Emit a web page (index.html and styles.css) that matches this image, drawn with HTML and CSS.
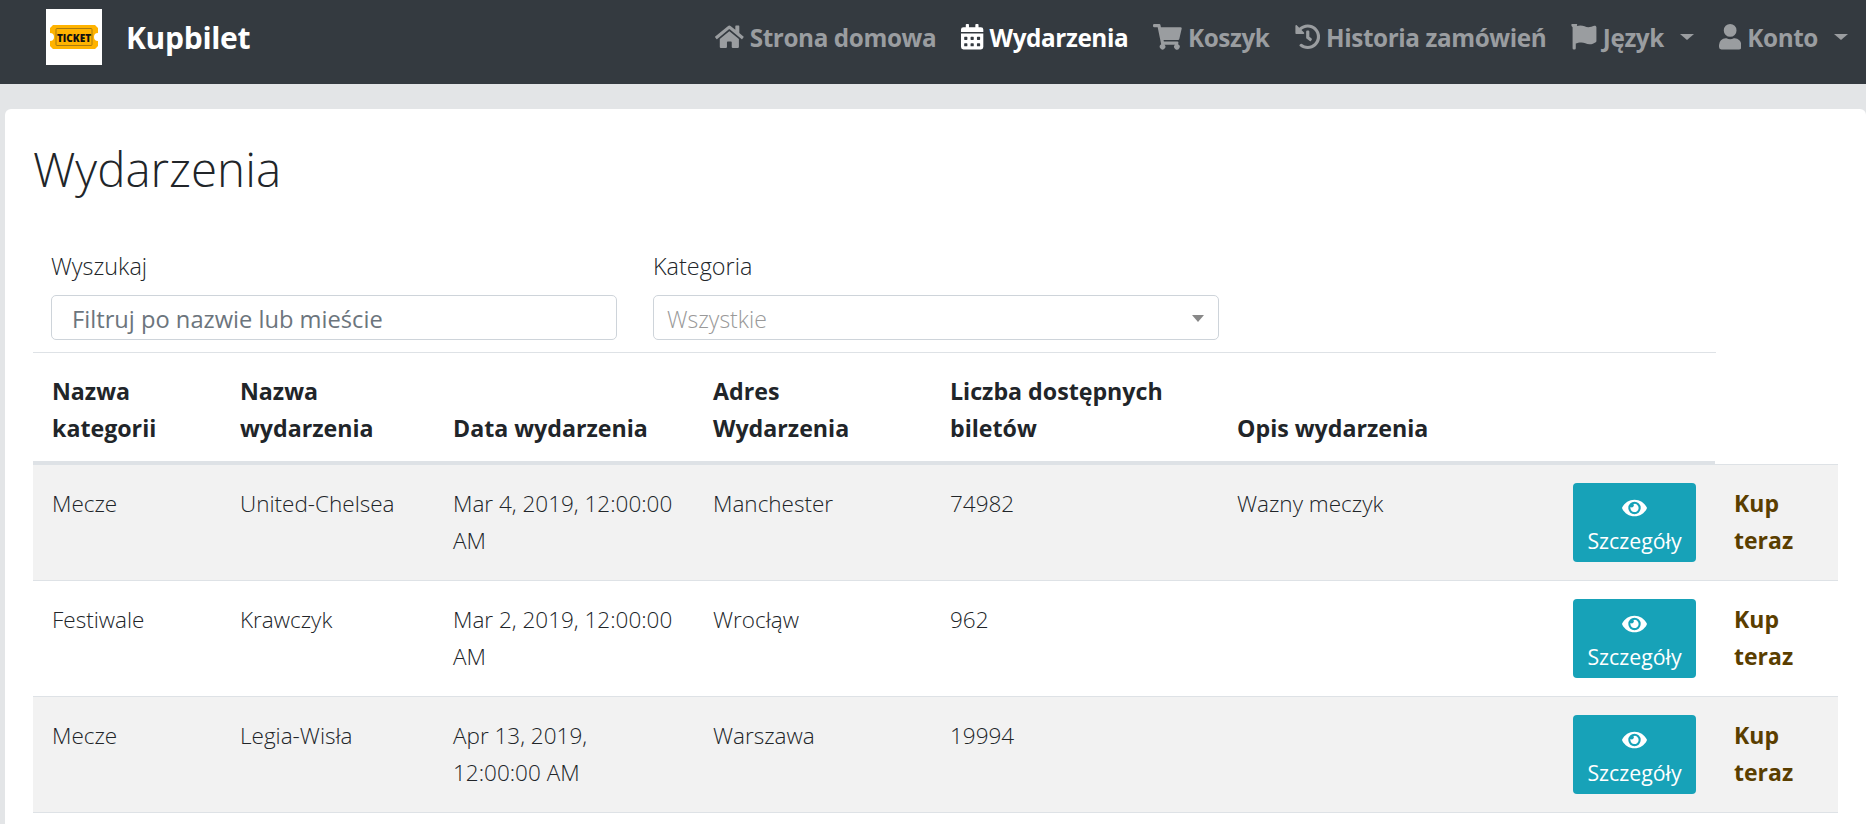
FILE: index.html
```html
<!DOCTYPE html>
<html lang="pl">

<head>
    <meta charset="UTF-8">
    <meta name="viewport" content="width=device-width, initial-scale=1.0">
    <title>Kupbilet</title>
    <link rel="stylesheet" href="styles.css">
</head>

<body>

    <!-- Navbar -->
    <nav class="navbar">
        <div class="brand">
            <div class="brand-logo">
                <svg viewBox="0 0 48 24" width="48" height="24">
                    <path d="M3 0h42l3 3v5a4 4 0 0 0 0 8v5l-3 3H3l-3-3v-5a4 4 0 0 0 0-8V3z" fill="#ffb300" />
                    <rect x="6" y="3.500" width="36" height="17" rx="1" fill="none" stroke="#a87a10" />
                    <text x="24" y="16.500" class="logo-text">TICKET</text>
                </svg>
            </div>
            <span class="brand-name">Kupbilet</span>
        </div>
        <ul class="nav-links">
            <li class="nav-item">
                <svg class="nav-icon" viewBox="0 0 576 512"><path d="M280.400 148.300L96 300.100V464a16 16 0 0 0 16 16l112.100-.3a16 16 0 0 0 15.900-16V368a16 16 0 0 1 16-16h64a16 16 0 0 1 16 16v95.600a16 16 0 0 0 16 16l112 .4a16 16 0 0 0 16-16V300L295.700 148.300a12.200 12.200 0 0 0-15.300 0zM571.600 251.500L488 182.600V44.100a12 12 0 0 0-12-12h-56a12 12 0 0 0-12 12v72.600L318.500 43a48 48 0 0 0-61 0L4.300 251.500a12 12 0 0 0-1.600 16.900l25.500 31a12 12 0 0 0 16.900 1.600l235.200-193.700a12.200 12.200 0 0 1 15.300 0L530.900 301a12 12 0 0 0 16.900-1.600l25.500-31a12 12 0 0 0-1.700-16.900z"/></svg>
                Strona domowa
            </li>
            <li class="nav-item active">
                <svg class="nav-icon" viewBox="0 0 448 512"><path d="M0 464a48 48 0 0 0 48 48h352a48 48 0 0 0 48-48V192H0zm320-196a12 12 0 0 1 12-12h40a12 12 0 0 1 12 12v40a12 12 0 0 1-12 12h-40a12 12 0 0 1-12-12zm0 128a12 12 0 0 1 12-12h40a12 12 0 0 1 12 12v40a12 12 0 0 1-12 12h-40a12 12 0 0 1-12-12zM192 268a12 12 0 0 1 12-12h40a12 12 0 0 1 12 12v40a12 12 0 0 1-12 12h-40a12 12 0 0 1-12-12zm0 128a12 12 0 0 1 12-12h40a12 12 0 0 1 12 12v40a12 12 0 0 1-12 12h-40a12 12 0 0 1-12-12zM64 268a12 12 0 0 1 12-12h40a12 12 0 0 1 12 12v40a12 12 0 0 1-12 12H76a12 12 0 0 1-12-12zm0 128a12 12 0 0 1 12-12h40a12 12 0 0 1 12 12v40a12 12 0 0 1-12 12H76a12 12 0 0 1-12-12zM400 64h-48V16a16 16 0 0 0-16-16h-32a16 16 0 0 0-16 16v48H160V16a16 16 0 0 0-16-16h-32a16 16 0 0 0-16 16v48H48A48 48 0 0 0 0 112v48h448v-48a48 48 0 0 0-48-48z"/></svg>
                Wydarzenia
            </li>
            <li class="nav-item">
                <svg class="nav-icon" viewBox="0 0 576 512"><path d="M528.100 301.300l47.300-208A24 24 0 0 0 552 64H159.200l-9.200-44.800A24 24 0 0 0 126.500 0H24A24 24 0 0 0 0 24v16a24 24 0 0 0 24 24h69.900l70.200 343.400a56 56 0 1 0 67.100 8.600h209.600a56 56 0 1 0 63.600-10.400l5.500-24.300A24 24 0 0 0 487 352H218.700l-6.500-32h292.500a24 24 0 0 0 23.400-18.700z"/></svg>
                Koszyk
            </li>
            <li class="nav-item">
                <svg class="nav-icon" viewBox="0 0 512 512"><path d="M504 255.500c.3 136.600-111.200 248.400-247.800 248.500-59 0-113.200-20.500-155.800-54.900a24 24 0 0 1-1.800-35.600l11.300-11.300a24 24 0 0 1 31.900-2C173.100 425.100 212.800 440 256 440c101.700 0 184-82.300 184-184 0-101.700-82.300-184-184-184-48.800 0-93.100 19-126 49.900l50.700 50.800c10.100 10.100 2.900 27.300-11.300 27.300H24c-8.800 0-16-7.200-16-16V38.600c0-14.300 17.200-21.400 27.300-11.300l49.400 49.400C129.300 34.100 189.600 8 256 8c136.800 0 247.700 110.800 248 247.500zm-180.900 78.800l9.800-12.600a24 24 0 0 0-4.200-33.700L288 256.300V152a24 24 0 0 0-24-24h-16a24 24 0 0 0-24 24v135.700l65.400 50.900a24 24 0 0 0 33.700-4.300z"/></svg>
                Historia zamówień
            </li>
            <li class="nav-item">
                <svg class="nav-icon" viewBox="0 0 512 512"><path d="M349.600 64c-53.300 0-97.300-34.600-164.300-34.600-24.800 0-47 4.400-67.600 11.900a56 56 0 1 0-85.700 23.700V488a24 24 0 0 0 24 24h16a24 24 0 0 0 24-24v-94.400c28.300-12.100 63.600-22.100 114.400-22.100 53.300 0 97.300 34.600 164.300 34.600 47.900 0 86.200-16.200 121.800-40.700 8.700-6 13.800-15.800 13.800-26.300V65.100c0-23.400-24.300-38.900-45.500-29C426.600 51 390 64 349.600 64z"/></svg>
                Język
                <span class="caret"></span>
            </li>
            <li class="nav-item">
                <svg class="nav-icon" viewBox="0 0 448 512"><path d="M224 256a128 128 0 1 0 0-256 128 128 0 0 0 0 256zm89.600 32h-16.700a174.100 174.100 0 0 1-145.800 0h-16.700A134.400 134.400 0 0 0 0 422.400V464a48 48 0 0 0 48 48h352a48 48 0 0 0 48-48v-41.600A134.400 134.400 0 0 0 313.600 288z"/></svg>
                Konto
                <span class="caret"></span>
            </li>
        </ul>
    </nav>

    <!-- Content -->
    <main class="card">
        <h1 class="page-title">Wydarzenia</h1>

        <div class="filters">
            <div class="filter">
                <label class="filter-label">Wyszukaj</label>
                <div class="field field-search">Filtruj po nazwie lub mieście</div>
            </div>
            <div class="filter">
                <label class="filter-label">Kategoria</label>
                <div class="field field-select">
                    Wszystkie
                    <span class="select-arrow"></span>
                </div>
            </div>
        </div>

        <table class="events">
            <thead>
                <tr>
                    <th class="col-category">Nazwa kategorii</th>
                    <th class="col-name">Nazwa wydarzenia</th>
                    <th class="col-date">Data wydarzenia</th>
                    <th class="col-address">Adres Wydarzenia</th>
                    <th class="col-tickets">Liczba dostępnych biletów</th>
                    <th class="col-desc">Opis wydarzenia</th>
                    <th class="col-details"></th>
                    <th class="col-buy"></th>
                </tr>
            </thead>
            <tbody>
                <tr>
                    <td>Mecze</td>
                    <td>United-Chelsea</td>
                    <td>Mar 4, 2019, 12:00:00 AM</td>
                    <td>Manchester</td>
                    <td>74982</td>
                    <td>Wazny meczyk</td>
                    <td class="details"><span class="btn-details"><svg class="eye" viewBox="0 0 576 512"><path d="M572.500 241.400C518.300 135.600 410.900 64 288 64S57.700 135.600 3.500 241.400a32.400 32.400 0 0 0 0 29.200C57.700 376.400 165.100 448 288 448s230.300-71.600 284.500-177.400a32.400 32.400 0 0 0 0-29.200zM288 400a144 144 0 1 1 144-144 143.900 143.900 0 0 1-144 144zm0-240a95.300 95.300 0 0 0-25.300 3.800 47.900 47.900 0 0 1-66.900 66.900A95.800 95.800 0 1 0 288 160z"/></svg>Szczegóły</span></td>
                    <td class="buy">Kup teraz</td>
                </tr>
                <tr>
                    <td>Festiwale</td>
                    <td>Krawczyk</td>
                    <td>Mar 2, 2019, 12:00:00 AM</td>
                    <td>Wrocłąw</td>
                    <td>962</td>
                    <td></td>
                    <td class="details"><span class="btn-details"><svg class="eye" viewBox="0 0 576 512"><path d="M572.500 241.400C518.300 135.600 410.900 64 288 64S57.700 135.600 3.500 241.400a32.400 32.400 0 0 0 0 29.200C57.700 376.400 165.100 448 288 448s230.300-71.600 284.500-177.400a32.400 32.400 0 0 0 0-29.200zM288 400a144 144 0 1 1 144-144 143.900 143.900 0 0 1-144 144zm0-240a95.300 95.300 0 0 0-25.300 3.800 47.900 47.900 0 0 1-66.900 66.900A95.800 95.800 0 1 0 288 160z"/></svg>Szczegóły</span></td>
                    <td class="buy">Kup teraz</td>
                </tr>
                <tr>
                    <td>Mecze</td>
                    <td>Legia-Wisła</td>
                    <td>Apr 13, 2019, 12:00:00 AM</td>
                    <td>Warszawa</td>
                    <td>19994</td>
                    <td></td>
                    <td class="details"><span class="btn-details"><svg class="eye" viewBox="0 0 576 512"><path d="M572.500 241.400C518.300 135.600 410.900 64 288 64S57.700 135.600 3.500 241.400a32.400 32.400 0 0 0 0 29.200C57.700 376.400 165.100 448 288 448s230.300-71.600 284.500-177.400a32.400 32.400 0 0 0 0-29.200zM288 400a144 144 0 1 1 144-144 143.900 143.900 0 0 1-144 144zm0-240a95.300 95.300 0 0 0-25.300 3.800 47.900 47.900 0 0 1-66.900 66.900A95.800 95.800 0 1 0 288 160z"/></svg>Szczegóły</span></td>
                    <td class="buy">Kup teraz</td>
                </tr>
            </tbody>
        </table>
    </main>

</body>

</html>
```

FILE: styles.css
```css
* {
    box-sizing: border-box;
}

html,
body {
    margin: 0;
    height: 100%;
    overflow: hidden;
}

body {
    background-color: #e3e5e7;
    font-family: "Open Sans", "Noto Sans", sans-serif;
    color: #212529;
}

/* Navbar */
.navbar {
    display: flex;
    justify-content: space-between;
    align-items: flex-start;
    height: 84px;
    padding: 9px 18px 0 46px;
    background-color: #343a40;
}

.brand {
    display: flex;
    align-items: center;
    gap: 24px;
}

.brand-logo {
    display: flex;
    align-items: center;
    justify-content: center;
    width: 56px;
    height: 56px;
    background-color: #fff;
}

.logo-text {
    font-size: 10px;
    font-weight: 800;
    text-anchor: middle;
    fill: #111;
}

.brand-name {
    font-size: 30px;
    font-weight: 700;
    letter-spacing: -0.3px;
    color: #fff;
}

.nav-links {
    display: flex;
    align-items: center;
    gap: 25px;
    height: 56px;
    margin: 0;
    padding: 0;
    list-style: none;
}

.nav-item {
    display: flex;
    align-items: center;
    gap: 6px;
    font-size: 24.300px;
    font-weight: 700;
    letter-spacing: -0.4px;
    color: #9a9da0;
}

.nav-item.active {
    color: #fff;
}

.nav-icon {
    height: 25.500px;
    fill: currentColor;
}

.caret {
    margin-left: 10px;
    border-top: 6px solid;
    border-left: 7px solid transparent;
    border-right: 7px solid transparent;
}

/* Content */
.card {
    height: 740px;
    margin: 25px 0 0 5px;
    padding: 0 28px;
    border-radius: 6px 6px 0 0;
    background-color: #fff;
}

.page-title {
    margin: 0;
    padding-top: 28px;
    font-size: 47.500px;
    line-height: 64px;
    font-weight: 300;
}

.filters {
    display: flex;
    gap: 36px;
    width: 1683px;
    margin-top: 50px;
    padding: 0 18px 12px;
    border-bottom: 1px solid #dee2e6;
}

.filter {
    display: flex;
    flex-direction: column;
    gap: 14px;
    width: 566px;
}

.filter-label {
    font-size: 23.400px;
    line-height: 30px;
    font-weight: 300;
}

.field {
    display: flex;
    align-items: center;
    height: 45px;
    padding-top: 2px;
    border: 1px solid #ced4da;
    border-radius: 5px;
    font-size: 23px;
    font-weight: 300;
}

.field-search {
    padding-left: 20px;
    font-size: 23.700px;
    font-weight: 400;
    color: #6c757d;
}

.field-select {
    justify-content: space-between;
    padding-left: 13px;
    padding-right: 14px;
    color: #999;
}

.select-arrow {
    border-top: 7px solid #888;
    border-left: 6px solid transparent;
    border-right: 6px solid transparent;
}

/* Events table */
.events {
    width: 1805px;
    table-layout: fixed;
    border-collapse: separate;
    border-spacing: 0;
    font-size: 22.500px;
    line-height: 37px;
}

.events th {
    padding: 20px 18px 14px 19px;
    border-bottom: 3px solid #dee2e6;
    text-align: left;
    vertical-align: bottom;
    font-size: 23.200px;
    font-weight: 700;
}

.events th.col-buy {
    border-bottom: none;
}

.events td {
    height: 116px;
    padding: 20px 18px 16px 19px;
    border-bottom: 1px solid #dee2e6;
    vertical-align: top;
    font-weight: 300;
}

.events td.details {
    padding-top: 18px;
}

.events tbody tr:first-child td {
    height: 117px;
    border-top: 1px solid #dee2e6;
}

.events tbody tr:nth-child(odd) {
    background-color: #f2f2f2;
}

.col-category { width: 188px; }
.col-name { width: 213px; }
.col-date { width: 260px; }
.col-address { width: 237px; }
.col-tickets { width: 287px; }
.col-desc { width: 336px; }
.col-details { width: 161px; }
.col-buy { width: 123px; }

.btn-details {
    display: flex;
    flex-direction: column;
    align-items: center;
    justify-content: center;
    gap: 7px;
    width: 123px;
    height: 79px;
    padding-top: 7px;
    border-radius: 4px;
    background-color: #17a2b8;
    font-size: 21.300px;
    line-height: 30px;
    font-weight: 400;
    color: #fff;
}

.eye {
    width: 25px;
    height: 22px;
    fill: #fff;
}

.events td.buy {
    font-size: 23px;
    font-weight: 700;
    color: #5a3e00;
}
```
